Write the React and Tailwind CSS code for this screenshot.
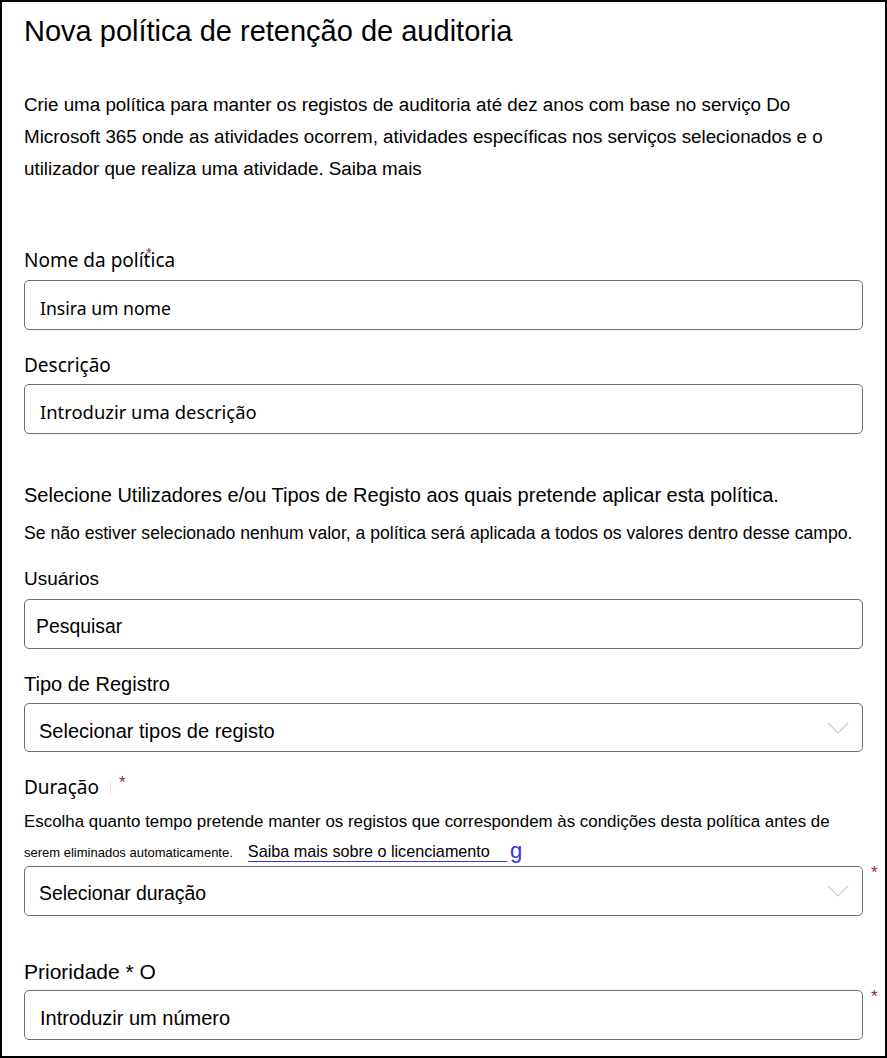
import React from "react";

const arial = { fontFamily: '"Liberation Sans", Arial, sans-serif' };
const segoe = { fontFamily: '"Noto Sans", "Open Sans", sans-serif' };

function Chevron() {
  return (
    <svg width="22" height="12" viewBox="0 0 22 12" className="shrink-0">
      <polyline points="1,1 11,11 21,1" fill="none" stroke="#cbcbcb" strokeWidth="1.2" />
    </svg>
  );
}

function Field({ children, className = "", font = arial, chevron = false }) {
  return (
    <div
      className={`flex w-[839px] shrink-0 items-center justify-between rounded-[5px] border border-[#6e6e6e] bg-white text-black ${className}`}
      style={font}
    >
      <span className="whitespace-nowrap pt-[6px]">{children}</span>
      {chevron && (
        <span className="mr-[13px]">
          <Chevron />
        </span>
      )}
    </div>
  );
}

function Star({ className = "" }) {
  return <span className={`text-[#a4262c] ${className}`} style={arial}>*</span>;
}

export default function App() {
  return (
    <div className="h-[1058px] w-[887px] overflow-hidden border-2 border-black bg-white pl-[22px] pt-[11px] text-black">
      <h1 className="whitespace-nowrap text-[29px] leading-[36px] font-normal" style={arial}>
        Nova política de retenção de auditoria
      </h1>

      <p className="mt-[40px] whitespace-nowrap text-[18.8px] leading-[32px]" style={arial}>
        Crie uma política para manter os registos de auditoria até dez anos com base no serviço Do
        <br />
        Microsoft 365 onde as atividades ocorrem, atividades específicas nos serviços selecionados e o
        <br />
        utilizador que realiza uma atividade. Saiba mais
      </p>

      <div className="mt-[63px] text-[19px] leading-[24px]" style={segoe}>
        <span className="relative">
          Nome da política
          <span className="absolute left-[122px] top-[-1px] text-[15px] leading-[13px] text-[#a4262c]" style={arial}>*</span>
        </span>
      </div>
      <Field className="mt-[8px] h-[50px] pl-[15px] text-[17.6px]" font={segoe}>
        Insira um nome
      </Field>

      <div className="mt-[23px] text-[19px] leading-[24px]" style={segoe}>
        Descrição
      </div>
      <Field className="mt-[7px] h-[50px] pl-[15px] text-[18.4px]" font={segoe}>
        Introduzir uma descrição
      </Field>

      <div className="mt-[48px] whitespace-nowrap text-[20px] leading-[26px]" style={arial}>
        Selecione Utilizadores e/ou Tipos de Registo aos quais pretende aplicar esta política.
      </div>
      <div className="mt-[14px] whitespace-nowrap text-[17.6px] leading-[22px]" style={arial}>
        Se não estiver selecionado nenhum valor, a política será aplicada a todos os valores dentro desse campo.
      </div>

      <div className="mt-[23px] text-[19px] leading-[24px]" style={arial}>
        Usuários
      </div>
      <Field className="mt-[8px] h-[50px] pl-[11px] text-[19.4px]">Pesquisar</Field>

      <div className="mt-[23px] text-[20px] leading-[24px]" style={arial}>
        Tipo de Registro
      </div>
      <Field className="mt-[7px] h-[49px] pl-[14px] text-[20px]" chevron>
        Selecionar tipos de registo
      </Field>

      <div className="mt-[23px] flex items-start text-[19px] leading-[24px]" style={segoe}>
        <span>Duração</span>
        <span className="ml-[11px] mt-[6px] h-[14px] w-px bg-[#e6e6e6]" />
        <span className="ml-[8px] text-[17px] leading-[16px] text-[#a4262c]" style={arial}>*</span>
      </div>
      <div className="mt-[12px] whitespace-nowrap text-[16.9px] leading-[22px]" style={arial}>
        Escolha quanto tempo pretende manter os registos que correspondem às condições desta política antes de
      </div>
      <div className="mt-[7px] flex h-[22px] items-end whitespace-nowrap" style={arial}>
        <span className="text-[13px] leading-[18px]">serem eliminados automaticamente.</span>
        <span className="ml-[15px] border-b border-[#3434d8] pr-[17px] text-[16.2px] leading-[19px]">
          Saiba mais sobre o licenciamento
        </span>
        <span className="ml-[3px] text-[22px] leading-[22px] text-[#3434d8]">g</span>
      </div>

      <div className="mt-[4px] flex items-start">
        <Field className="h-[50px] pl-[14px] text-[19.4px]" chevron>
          Selecionar duração
        </Field>
        <Star className="ml-[8px] text-[17px] leading-[14px]" />
      </div>

      <div className="mt-[44px] whitespace-nowrap text-[21px] leading-[24px]" style={arial}>
        Prioridade * O
      </div>
      <div className="mt-[6px] flex items-start">
        <Field className="h-[50px] pl-[15px] text-[20px]">Introduzir um número</Field>
        <Star className="ml-[8px] text-[17px] leading-[14px]" />
      </div>
    </div>
  );
}
